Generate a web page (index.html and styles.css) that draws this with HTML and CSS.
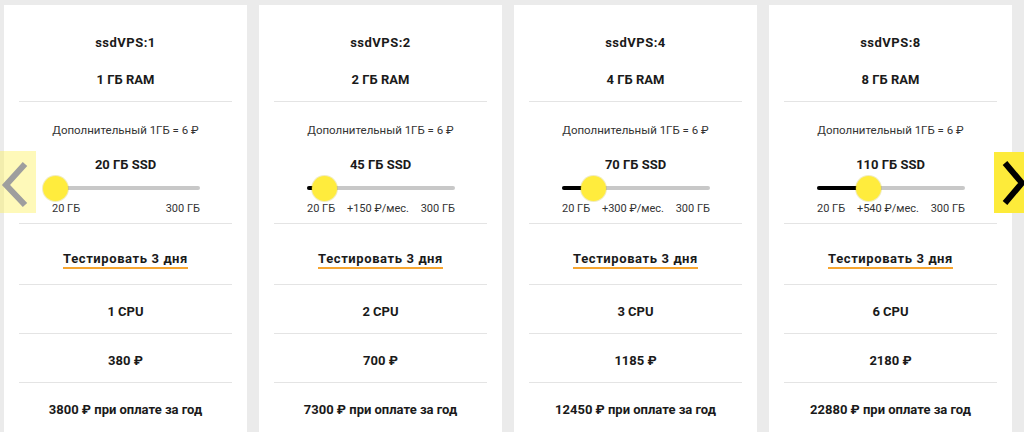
FILE: index.html
```html
<!DOCTYPE html>
<html lang="ru">
<head>
<meta charset="utf-8">
<title>ssdVPS</title>
<link rel="stylesheet" href="styles.css">
</head>
<body>
<div class="slider-wrap">
  <div class="cards">
    <div class="card">
      <div class="head">
        <div class="title">ssdVPS:1</div>
        <div class="ram">1 ГБ RAM</div>
      </div>
      <div class="disk">
        <div class="extra">Дополнительный 1ГБ = 6 ₽</div>
        <div class="ssd">20 ГБ SSD</div>
        <div class="range">
          <div class="track">
            <div class="fill" style="width:3px"></div>
            <div class="thumb" style="left:3px"></div>
          </div>
        </div>
        <div class="labels"><span>20 ГБ</span><span>300 ГБ</span></div>
      </div>
      <div class="test"><span class="link">Тестировать 3 дня</span></div>
      <div class="row">1 CPU</div>
      <div class="row">380 ₽</div>
      <div class="row">3800 ₽ при оплате за год</div>
    </div>

    <div class="card">
      <div class="head">
        <div class="title">ssdVPS:2</div>
        <div class="ram">2 ГБ RAM</div>
      </div>
      <div class="disk">
        <div class="extra">Дополнительный 1ГБ = 6 ₽</div>
        <div class="ssd">45 ГБ SSD</div>
        <div class="range">
          <div class="track">
            <div class="fill" style="width:17px"></div>
            <div class="thumb" style="left:17px"></div>
          </div>
        </div>
        <div class="labels"><span>20 ГБ</span><span>+150 ₽/мес.</span><span>300 ГБ</span></div>
      </div>
      <div class="test"><span class="link">Тестировать 3 дня</span></div>
      <div class="row">2 CPU</div>
      <div class="row">700 ₽</div>
      <div class="row">7300 ₽ при оплате за год</div>
    </div>

    <div class="card">
      <div class="head">
        <div class="title">ssdVPS:4</div>
        <div class="ram">4 ГБ RAM</div>
      </div>
      <div class="disk">
        <div class="extra">Дополнительный 1ГБ = 6 ₽</div>
        <div class="ssd">70 ГБ SSD</div>
        <div class="range">
          <div class="track">
            <div class="fill" style="width:31px"></div>
            <div class="thumb" style="left:31px"></div>
          </div>
        </div>
        <div class="labels"><span>20 ГБ</span><span>+300 ₽/мес.</span><span>300 ГБ</span></div>
      </div>
      <div class="test"><span class="link">Тестировать 3 дня</span></div>
      <div class="row">3 CPU</div>
      <div class="row">1185 ₽</div>
      <div class="row">12450 ₽ при оплате за год</div>
    </div>

    <div class="card">
      <div class="head">
        <div class="title">ssdVPS:8</div>
        <div class="ram">8 ГБ RAM</div>
      </div>
      <div class="disk">
        <div class="extra">Дополнительный 1ГБ = 6 ₽</div>
        <div class="ssd">110 ГБ SSD</div>
        <div class="range">
          <div class="track">
            <div class="fill" style="width:51px"></div>
            <div class="thumb" style="left:51px"></div>
          </div>
        </div>
        <div class="labels"><span>20 ГБ</span><span>+540 ₽/мес.</span><span>300 ГБ</span></div>
      </div>
      <div class="test"><span class="link">Тестировать 3 дня</span></div>
      <div class="row">6 CPU</div>
      <div class="row">2180 ₽</div>
      <div class="row">22880 ₽ при оплате за год</div>
    </div>
  </div>

  <button class="arrow arrow-prev" aria-label="Назад">
    <svg width="36" height="62" viewBox="0 0 36 62"><polyline points="25,13 6,34 25,54" fill="none" stroke="#9e9e9e" stroke-width="6"/></svg>
  </button>
  <button class="arrow arrow-next" aria-label="Вперёд">
    <svg width="30" height="61" viewBox="0 0 30 61"><polyline points="11,11 28,31 11,51" fill="none" stroke="#000" stroke-width="6"/></svg>
  </button>
</div>
</body>
</html>
```

FILE: styles.css
```css
html, body {
  margin: 0;
  padding: 0;
  height: 100%;
  overflow: hidden;
}
body {
  background: #ebebeb;
  font-family: Roboto, "Liberation Sans", sans-serif;
  color: #1a1a1a;
}
.slider-wrap {
  position: relative;
  height: 432px;
}
.cards {
  display: flex;
  gap: 12px;
  padding: 5px 0 0 4px;
}
.card {
  flex: 0 0 243px;
  background: #fff;
  padding: 0 15px 0 15px;
  box-sizing: border-box;
  height: 440px;
  text-align: center;
}
.head {
  padding: 28px 0 11px;
  border-bottom: 1px solid #e4e4e4;
}
.title, .ram, .ssd, .row, .link {
  font-weight: 700;
  font-size: 13px;
  line-height: 20px;
}
.title {
  letter-spacing: 0.5px;
}
.ram {
  margin-top: 17px;
}
.disk {
  padding-top: 20px;
  padding-bottom: 7px;
  border-bottom: 1px solid #e4e4e4;
}
.extra {
  font-size: 11.5px;
  line-height: 16px;
  color: #333;
}
.ssd {
  margin-top: 17px;
}
.range {
  height: 24px;
  margin: 1px 32px 0 33px;
  display: flex;
  align-items: center;
}
.track {
  position: relative;
  flex: 1;
  height: 4px;
  border-radius: 2px;
  background: #c8c8c8;
}
.fill {
  height: 4px;
  border-radius: 2px;
  background: #000;
}
.thumb {
  position: absolute;
  top: 50%;
  width: 25px;
  height: 25px;
  margin: -12.5px 0 0 -12.5px;
  border-radius: 50%;
  background: #ffec3d;
  box-shadow: 0 0 0 1px rgba(200, 180, 0, 0.25);
}
.labels {
  display: flex;
  justify-content: space-between;
  margin: 2px 32px 0 33px;
  font-size: 11px;
  line-height: 14px;
  color: #333;
}
.test {
  padding: 24px 0 15px;
  border-bottom: 1px solid #e4e4e4;
}
.link {
  display: inline-block;
  line-height: 16px;
  letter-spacing: 0.6px;
  border-bottom: 2px solid #f6a530;
}
.row {
  padding: 17px 0 11px;
  border-bottom: 1px solid #e4e4e4;
}
.row:last-child {
  border-bottom: none;
}
.arrow {
  position: absolute;
  border: 0;
  padding: 0;
  margin: 0;
  display: block;
  cursor: pointer;
}
.arrow svg {
  display: block;
}
.arrow-prev {
  left: 0;
  top: 151px;
  width: 36px;
  height: 62px;
  background: rgba(253, 240, 80, 0.4);
}
.arrow-next {
  right: 0;
  top: 152px;
  width: 30px;
  height: 61px;
  background: #fdeb3a;
  overflow: hidden;
}
```
